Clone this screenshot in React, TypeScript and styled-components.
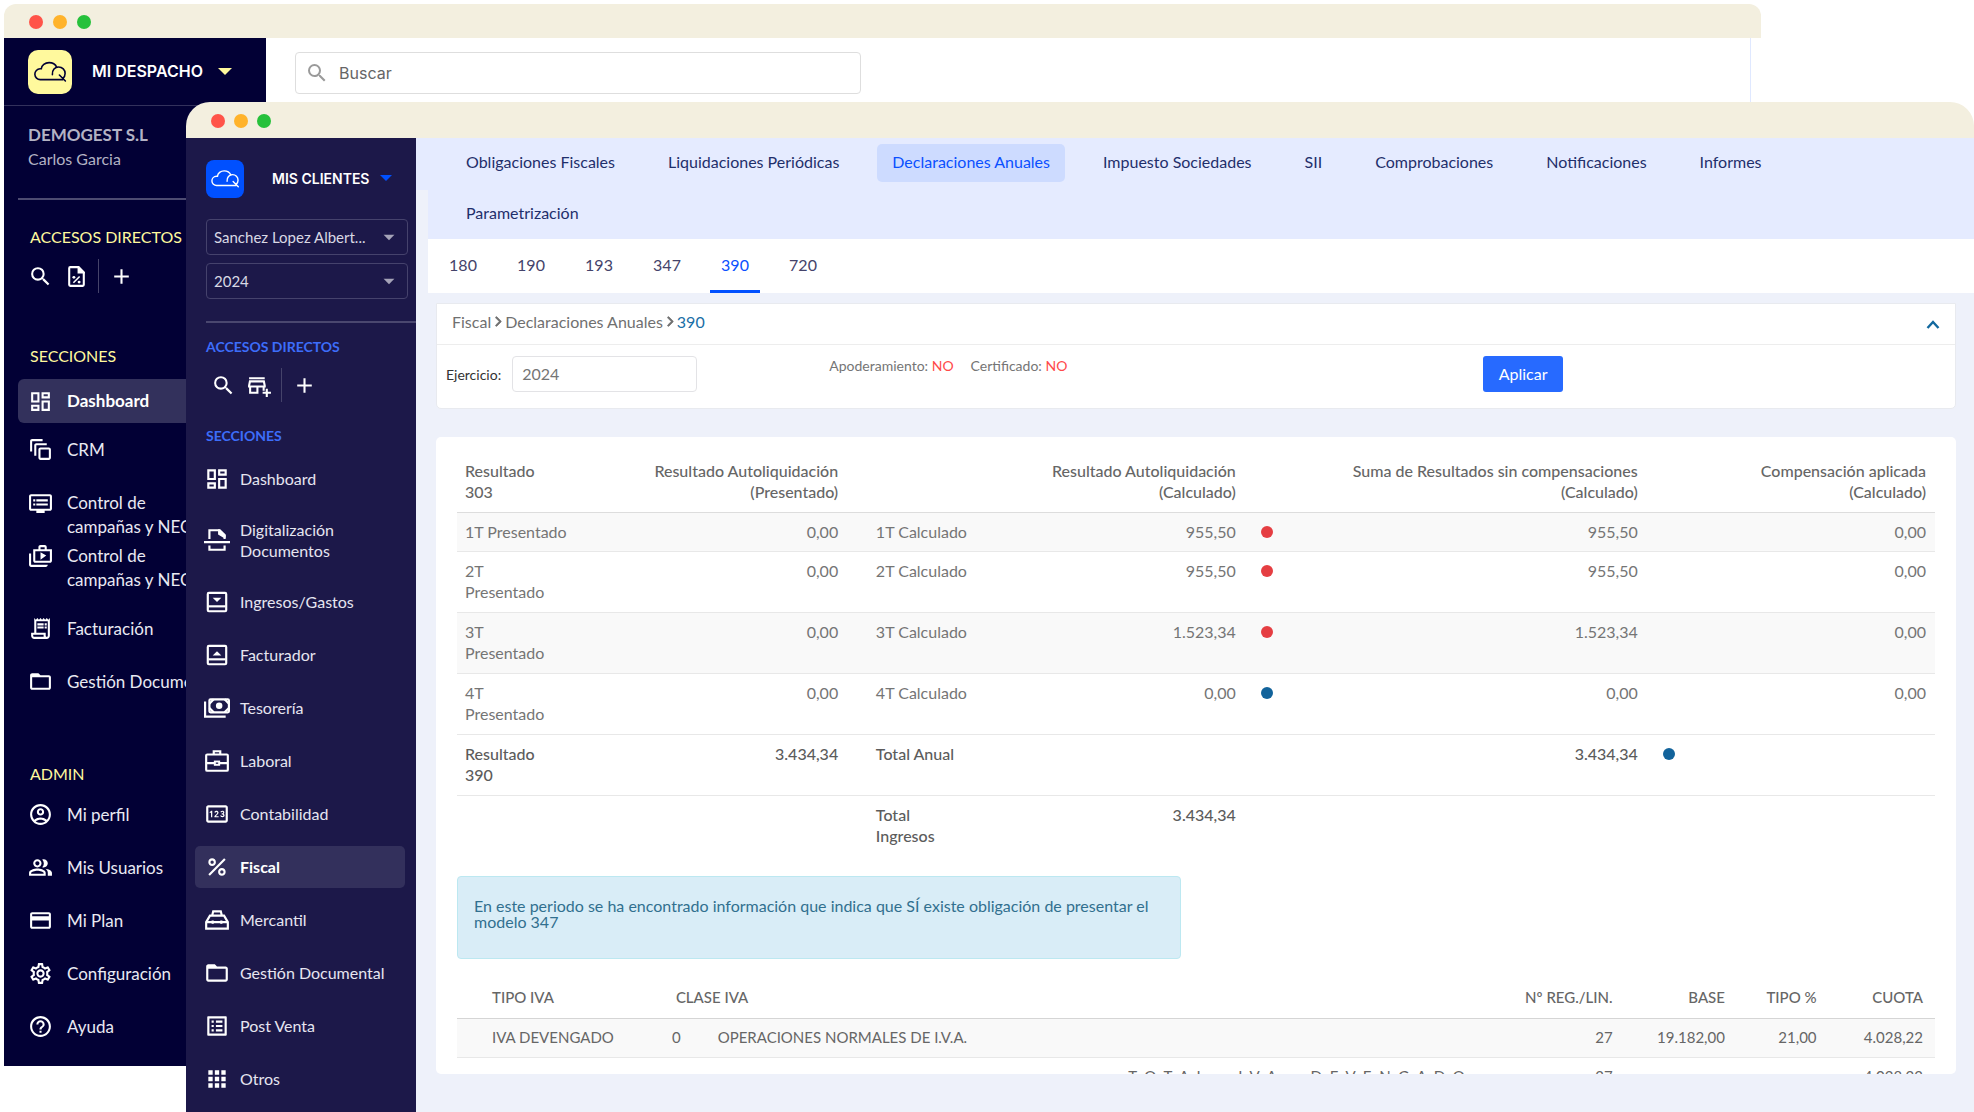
import React from "react";
import styled, { createGlobalStyle, css } from "styled-components";
import {
  MdAdd,
  MdApps,
  MdArrowDropDown,
  MdFolderOpen,
  MdHelpOutline,
  MdOutlineAccountCircle,
  MdOutlineAddBusiness,
  MdOutlineAutoAwesomeMotion,
  MdOutlineCreditCard,
  MdOutlineDashboard,
  MdOutlineDvr,
  MdOutlineListAlt,
  MdOutlinePeopleAlt,
  MdOutlinePercent,
  MdOutlinePin,
  MdOutlineReceiptLong,
  MdOutlineSettings,
  MdOutlineShopTwo,
  MdSearch,
} from "react-icons/md";
import { FaAngleRight } from "react-icons/fa6";

const GlobalStyle = createGlobalStyle`
  *, *::before, *::after { box-sizing: border-box; }
  body {
    margin: 0;
    background: #ffffff;
    font-family: Lato, "Open Sans", sans-serif;
    font-size: 16px;
    line-height: 21px;
  }
  button, input, select { font: inherit; }
  a { color: inherit; text-decoration: none; }
  ul { list-style: none; margin: 0; padding: 0; }
`;

/* ---------- windows ---------- */

const Desktop = styled.div`
  position: relative;
  height: 100vh;
  min-height: 700px;
  overflow: hidden;
`;

const BackWindow = styled.section`
  position: absolute;
  top: 4px;
  left: 4px;
  bottom: 46px;
  width: 89%;
  display: flex;
  flex-direction: column;
`;

const FrontWindow = styled.section`
  position: absolute;
  top: 102px;
  left: 186px;
  right: 0;
  bottom: 0;
  display: flex;
  flex-direction: column;
`;

const TitleBar = styled.div<{ $front?: boolean }>`
  display: flex;
  align-items: center;
  gap: ${(p) => (p.$front ? 9 : 10)}px;
  flex: none;
  height: ${(p) => (p.$front ? 36 : 34)}px;
  padding: 2px 0 0 25px;
  background: #f3efdf;
  border-radius: ${(p) => (p.$front ? "24px 24px 0 0" : "12px 12px 0 0")};
`;

const Light = styled.span<{ $color: string }>`
  width: 14px;
  height: 14px;
  border-radius: 50%;
  background: ${(p) => p.$color};
`;

const WindowBody = styled.div`
  flex: 1;
  min-height: 0;
  display: flex;
`;

/* ---------- back window ---------- */

const BackSidebar = styled.aside`
  flex: none;
  width: 262px;
  background: #020035;
  color: #e9e9f2;
  overflow: hidden;
`;

const BackBrand = styled.div`
  display: flex;
  align-items: center;
  gap: 20px;
  height: 68px;
  padding: 1px 24px 0 24px;
  border-bottom: 1px solid #33315c;
`;

const Logo = styled.span<{ $front?: boolean }>`
  display: grid;
  width: ${(p) => (p.$front ? 38 : 44)}px;
  height: ${(p) => (p.$front ? 38 : 44)}px;
  border-radius: ${(p) => (p.$front ? 8 : 10)}px;
  color: ${(p) => (p.$front ? "#ffffff" : "#020035")};
  background: ${(p) => (p.$front ? "#0050ff" : "#fff99d")};
`;

const SwitchButton = styled.button<{ $arrow: string; $small?: boolean }>`
  display: flex;
  align-items: center;
  gap: ${(p) => (p.$small ? 11 : 15)}px;
  padding: 0 0 2px;
  border: 0;
  background: none;
  color: #ffffff;
  font-family: Inter, sans-serif;
  font-weight: 600;
  font-size: ${(p) => (p.$small ? 14 : 16)}px;
  white-space: nowrap;

  &::after {
    content: "";
    border: solid transparent;
    border-width: ${(p) => (p.$small ? "6px 6px 0" : "7px 7px 0")};
    border-top-color: ${(p) => p.$arrow};
  }
`;

const Company = styled.div`
  height: 94px;
  margin-left: 14px;
  padding: 17px 0 0 10px;
  border-bottom: 2px solid #4d4b71;
  line-height: 24px;
  color: #b3b2c4;

  strong {
    display: block;
    font-size: 17px;
  }
`;

const GroupTitle = styled.h2<{ $color: string; $small?: boolean }>`
  margin: 0;
  font-size: ${(p) => (p.$small ? 14 : 16)}px;
  font-weight: ${(p) => (p.$small ? 700 : 400)};
  line-height: 22px;
  color: ${(p) => p.$color};
  white-space: nowrap;
`;

const BackGroup = styled.div<{ $top: number; $bottom?: number }>`
  padding: ${(p) => p.$top}px 0 ${(p) => p.$bottom ?? 0}px 26px;
`;

const Shortcuts = styled.div<{ $front?: boolean }>`
  display: flex;
  align-items: center;
  gap: 8px;
  height: 34px;
  margin: ${(p) => (p.$front ? "10px 0 23px 3px" : "11px 0 0 -4px")};
  color: #ffffff;
`;

const IconButton = styled.button`
  display: grid;
  place-items: center;
  width: 28px;
  height: 28px;
  padding: 0;
  border: 0;
  background: none;
  color: inherit;
  font-size: 25px;
`;

const Separator = styled.span`
  width: 1px;
  height: 34px;
  background: #45436a;
`;

const BackNav = styled.ul<{ $bottom?: number }>`
  padding-left: 14px;
  margin-bottom: ${(p) => p.$bottom ?? 0}px;
`;

const BackLink = styled.a<{ $active?: boolean }>`
  display: flex;
  align-items: center;
  gap: 14px;
  min-height: 53px;
  padding-left: 10px;
  font-size: 17px;
  line-height: 24px;

  svg {
    flex: none;
    font-size: 25px;
    color: #ffffff;
  }

  ${(p) =>
    p.$active &&
    css`
      min-height: 44px;
      border-radius: 6px;
      background: #33315c;
      color: #ffffff;
      font-weight: 700;
    `}
`;

const BackWrapLink = styled(BackLink)`
  align-items: flex-start;
  white-space: nowrap;
`;

const BackMain = styled.main`
  flex: 1;
  margin-right: 10px;
  padding: 14px 29px;
  background: #ffffff;
  border-right: 1px solid #dfe8ff;
`;

const SearchBox = styled.label`
  display: flex;
  align-items: center;
  gap: 8px;
  max-width: 566px;
  height: 42px;
  padding-left: 9px;
  border: 1px solid #dedede;
  border-radius: 4px;
  color: #9a9a9a;

  svg { font-size: 24px; }

  input {
    flex: 1;
    border: 0;
    outline: 0;
    font-family: Inter, sans-serif;
    font-size: 16px;
    background: none;
  }
  input::placeholder { color: #666666; opacity: 1; }
`;

/* ---------- front window ---------- */

const FrontSidebar = styled.aside`
  flex: none;
  width: 230px;
  padding-left: 20px;
  background: #1c1849;
  color: #e6e5f0;
  overflow: hidden;
`;

const FrontBrand = styled.div`
  display: flex;
  align-items: center;
  gap: 28px;
  padding: 22px 0 21px;
`;

const Picker = styled.div`
  display: grid;
  align-items: center;
  margin: 0 8px 8px 0;

  select, svg { grid-area: 1 / 1; }

  svg {
    justify-self: end;
    margin-right: 6px;
    font-size: 26px;
    color: #a5a3b8;
    pointer-events: none;
  }

  select {
    width: 100%;
    height: 36px;
    padding: 0 30px 0 7px;
    appearance: none;
    border: 1px solid #45426c;
    border-radius: 4px;
    background: #1c1849;
    color: #d9d8e4;
    font-size: 15px;
  }
`;

const FrontDivider = styled.hr`
  margin: 22px 0 13px;
  border: 0;
  border-top: 2px solid #4a476f;
`;

const FrontNav = styled.ul`
  margin: 5px 11px 0 -11px;
`;

const FrontItem = styled.li<{ $tall?: boolean }>`
  display: grid;
  align-items: center;
  height: ${(p) => (p.$tall ? 70 : 53)}px;
`;

const FrontLink = styled.a<{ $active?: boolean }>`
  display: flex;
  align-items: center;
  gap: 10px;
  min-height: 42px;
  padding-left: 9px;
  border-radius: 5px;
  font-size: 16px;
  line-height: 21px;

  svg {
    flex: none;
    font-size: 26px;
    color: #ffffff;
  }

  ${(p) =>
    p.$active &&
    css`
      background: #33305c;
      color: #ffffff;
      font-weight: 700;
    `}
`;

const FrontMain = styled.main`
  flex: 1;
  min-width: 0;
  display: flex;
  flex-direction: column;
  background: #eef1fa;
  color: #757575;
`;

const Tabs = styled.nav`
  display: flex;
  flex-wrap: wrap;
  gap: 13px 23px;
  padding: 6px 60px 6px 35px;
  background: linear-gradient(#eef1fa, #eef1fa) 0 52px / 12px 100% no-repeat #e5ebff;
`;

const Tab = styled.a<{ $active?: boolean }>`
  padding: 7px 15px 10px;
  border-radius: 5px;
  color: ${(p) => (p.$active ? "#0a50ff" : "#1f2f6b")};
  background: ${(p) => (p.$active ? "#cddbff" : "transparent")};
`;

const SubTabs = styled.nav`
  display: flex;
  gap: 18px;
  margin-left: 12px;
  padding-left: 10px;
  background: #ffffff;
`;

const SubTab = styled.a<{ $active?: boolean }>`
  min-width: 50px;
  padding: 15px 0;
  border-bottom: 3px solid ${(p) => (p.$active ? "#0050ff" : "transparent")};
  color: ${(p) => (p.$active ? "#0a50ff" : "#44436a")};
  text-align: center;
`;

const FilterCard = styled.section`
  margin: 10px 18px 0 20px;
  border: 1px solid #e8eaef;
  border-radius: 0 0 5px 5px;
  background: #ffffff;
`;

const CardHead = styled.div`
  display: flex;
  align-items: center;
  justify-content: space-between;
  height: 41px;
  padding: 0 12px 5px 15px;
  border-bottom: 1px solid #ededed;
`;

const Breadcrumb = styled.nav`
  display: flex;
  align-items: center;
  gap: 3px;
  color: #707070;

  svg {
    width: 8px;
    height: 13px;
    stroke: currentColor;
    stroke-width: 30px;
  }
`;

const Current = styled.a`
  color: #1a6ea6;
`;

const Collapse = styled.button`
  padding: 6px 0 0;
  border: 0;
  background: none;
  color: #12689e;
  line-height: 0;
`;

const FilterBody = styled.form`
  display: grid;
  grid-template-columns: 25.4% 43.3% 1fr;
  align-items: start;
  padding: 11px 0 16px 9px;
`;

const YearField = styled.label`
  display: flex;
  align-items: center;
  gap: 11px;
  font-size: 14px;
  color: #333333;

  input {
    width: 185px;
    height: 36px;
    padding: 0 9px 2px;
    border: 1px solid #e3e3e6;
    border-radius: 4px;
    color: #757575;
    font-size: 16px;
  }
`;

const Status = styled.p`
  display: flex;
  gap: 17px;
  margin: 0;
  font-size: 14px;
  line-height: 20px;
`;

const No = styled.span`
  color: #ff4a4a;
`;

const Apply = styled.button`
  justify-self: start;
  height: 36px;
  padding: 0 16px 2px;
  border: 0;
  border-radius: 3px;
  background: #276aff;
  color: #ffffff;
`;

const ResultCard = styled.section`
  flex: 1;
  min-height: 0;
  overflow: hidden;
  margin: 28px 18px 38px 20px;
  padding: 14px 21px 0;
  border-radius: 5px;
  background: #ffffff;
`;

const Table = styled.table`
  width: 100%;
  table-layout: fixed;
  border-spacing: 0;

  th, td {
    padding: 8px 8px 9px;
    text-align: left;
    vertical-align: top;
    white-space: nowrap;
  }
  th {
    padding: 9px 8px 10px;
    font-weight: 500;
    color: #666666;
  }
`;

const Summary = styled(Table)`
  thead th { border-bottom: 1px solid #dddddd; }
  tbody tr:nth-child(-n + 5) > * { border-bottom: 1px solid #e8e8e8; }
  tbody tr:nth-child(1) > *, tbody tr:nth-child(3) > * { background: #f9f9f9; }
  tbody tr + tr > td { padding-bottom: 10px; }
  tr > .num { padding-right: 9px; text-align: right; }
`;

const TotalRow = styled.tr`
  td { font-weight: 500; color: #5c5c5c; }
`;

const Dot = styled.span<{ $color: "red" | "blue" }>`
  display: block;
  width: 12px;
  height: 12px;
  margin: 5px 0 0 8px;
  border-radius: 50%;
  background: ${(p) => (p.$color === "red" ? "#e53e42" : "#12639b")};
`;

const Notice = styled.div`
  width: 49%;
  min-height: 83px;
  margin: 20px 0 19px;
  padding: 21px 16px;
  border: 1px solid #bce8f1;
  border-radius: 4px;
  background: #d9edf7;
  color: #31708f;
  line-height: 16px;
`;

const VatTable = styled(Table)`
  color: #666666;
  font-size: 15px;

  thead th { border-bottom: 1px solid #d5d5d5; }
  tbody tr:first-child td { border-bottom: 1px solid #e8e8e8; background: #f9f9f9; }
  th, td { text-align: right; padding-left: 5px; padding-right: 12px; }
  tr > .text { text-align: left; }
  tr > .class { text-align: left; padding-left: 9px; }
  tr > .first { text-align: left; padding-left: 35px; }
`;

const Spaced = styled.td`
  && { white-space: pre; }
`;

/* ---------- drawings ---------- */

const CloudLogo = () => (
  <svg viewBox="0 0 44 44" fill="none" stroke="currentColor" strokeWidth="1.6" strokeLinecap="round" aria-hidden="true">
    <path d="M35 29.6H12.4a5.4 5.4 0 0 1-.3-10.8h1.2c.2-3.6 3.8-6.2 7.8-6.2 3.6 0 6.3 1.7 7.6 4.6" />
    <path d="M24.4 24.6c-.4-4.6 2.6-7.6 6.2-7.6 3.8 0 6.5 2.9 6.5 6.4 0 2.2-.9 4-2.4 5.2M31.4 25l6 6" />
  </svg>
);

const Glyph = ({ children }: { children: React.ReactNode }) => (
  <svg viewBox="0 0 24 24" width="1em" height="1em" fill="none" stroke="currentColor" strokeWidth="2" aria-hidden="true">
    {children}
  </svg>
);

const PercentFileIcon = () => (
  <Glyph>
    <path d="M14 3H6a1 1 0 0 0-1 1v16a1 1 0 0 0 1 1h12a1 1 0 0 0 1-1V8z" />
    <path d="M13 2h1l6 6v1h-7z" fill="currentColor" stroke="none" />
    <path d="m9 18 6-6" strokeWidth="1.6" />
    <circle cx="9.5" cy="12.8" r="1.4" fill="currentColor" stroke="none" />
    <circle cx="14.5" cy="17.4" r="1.4" fill="currentColor" stroke="none" />
  </Glyph>
);

const ScanIcon = () => (
  <Glyph>
    <path d="M5 11V3h9l5 5v3M5 17v4h14v-4M0 14h24" />
    <path d="M13 2h2l5 5v3h-2l-5-3z" fill="currentColor" stroke="none" />
  </Glyph>
);

const DrawerIcon = ({ up }: { up?: boolean }) => (
  <Glyph>
    <rect x="3.5" y="3.5" width="17" height="17" rx="1" />
    <path d="M4 16h16" />
    <path d={up ? "m8 12.500 4-4 4 4z" : "m8 8 4 4 4-4z"} fill="currentColor" stroke="none" />
  </Glyph>
);

const CashIcon = () => (
  <Glyph>
    <path d="M1 6v14h19" />
    <rect x="5" y="4" width="18" height="12" rx="1" />
    <circle cx="14" cy="10" r="3" fill="currentColor" stroke="none" />
    <path d="M5 8 9 4M5 12l4 4M23 8l-4-4M23 12l-4 4" />
  </Glyph>
);

const BriefcaseIcon = () => (
  <Glyph>
    <rect x="2" y="6" width="20" height="15" rx="1" />
    <path d="M9 6V3h6v3M2 14h8M14 14h8" />
    <rect x="10" y="12.5" width="4" height="3" strokeWidth="1.8" />
  </Glyph>
);

const ToolboxIcon = () => (
  <Glyph>
    <path d="M2 20v-6l3.5-6h13l3.5 6v6zM7.500 8l1-4h7l1 4M2 14h20" />
    <path d="M8 12.5v3M16 12.5v3" />
  </Glyph>
);

/* ---------- data ---------- */

type NavEntry = { label: React.ReactNode; icon: React.ReactNode; active?: boolean; tall?: boolean };

const adminNav: NavEntry[] = [
  { label: "Mi perfil", icon: <MdOutlineAccountCircle /> },
  { label: "Mis Usuarios", icon: <MdOutlinePeopleAlt /> },
  { label: "Mi Plan", icon: <MdOutlineCreditCard /> },
  { label: "Configuración", icon: <MdOutlineSettings /> },
  { label: "Ayuda", icon: <MdHelpOutline /> },
];

const clientNav: NavEntry[] = [
  { label: "Dashboard", icon: <MdOutlineDashboard /> },
  { label: <>Digitalización<br />Documentos</>, icon: <ScanIcon />, tall: true },
  { label: "Ingresos/Gastos", icon: <DrawerIcon /> },
  { label: "Facturador", icon: <DrawerIcon up /> },
  { label: "Tesorería", icon: <CashIcon /> },
  { label: "Laboral", icon: <BriefcaseIcon /> },
  { label: "Contabilidad", icon: <MdOutlinePin /> },
  { label: "Fiscal", icon: <MdOutlinePercent />, active: true },
  { label: "Mercantil", icon: <ToolboxIcon /> },
  { label: "Gestión Documental", icon: <MdFolderOpen /> },
  { label: "Post Venta", icon: <MdOutlineListAlt /> },
  { label: "Otros", icon: <MdApps /> },
];

const tabs = [
  "Obligaciones Fiscales",
  "Liquidaciones Periódicas",
  "Declaraciones Anuales",
  "Impuesto Sociedades",
  "SII",
  "Comprobaciones",
  "Notificaciones",
  "Informes",
  "Parametrización",
];

const models = ["180", "190", "193", "347", "390", "720"];

const quarters = [
  { label: "1T Presentado", calc: "1T Calculado", value: "955,50", color: "red" as const },
  { label: <>2T<br />Presentado</>, calc: "2T Calculado", value: "955,50", color: "red" as const },
  { label: <>3T<br />Presentado</>, calc: "3T Calculado", value: "1.523,34", color: "red" as const },
  { label: <>4T<br />Presentado</>, calc: "4T Calculado", value: "0,00", color: "blue" as const },
];

const summaryColumns = ["7.9%", "18.5%", "1.4%", "6.8%", "18.7%", "3%", "24.2%", "3%", "16.5%"];
const vatColumns = ["14.2%", "3.1%", "51.7%", "10%", "7.6%", "6.2%", "7.2%"];

const Columns = ({ widths }: { widths: string[] }) => (
  <colgroup>
    {widths.map((width, i) => (
      <col key={i} width={width} />
    ))}
  </colgroup>
);

const Lights = () => (
  <>
    <Light $color="#ff5449" />
    <Light $color="#ffb32b" />
    <Light $color="#26c13b" />
  </>
);

/* ---------- page ---------- */

const OfficeWindow = () => (
  <BackWindow>
    <TitleBar><Lights /></TitleBar>
    <WindowBody>
      <BackSidebar>
        <BackBrand>
          <Logo><CloudLogo /></Logo>
          <SwitchButton type="button" $arrow="#fff99d">MI DESPACHO</SwitchButton>
        </BackBrand>
        <Company>
          <strong>DEMOGEST S.L</strong>
          Carlos Garcia
        </Company>
        <BackGroup $top={26}>
          <GroupTitle $color="#fff99d">ACCESOS DIRECTOS</GroupTitle>
          <Shortcuts>
            <IconButton type="button" aria-label="Buscar"><MdSearch /></IconButton>
            <IconButton type="button" aria-label="Impuestos"><PercentFileIcon /></IconButton>
            <Separator />
            <IconButton type="button" aria-label="Añadir"><MdAdd /></IconButton>
          </Shortcuts>
        </BackGroup>
        <BackGroup $top={52} $bottom={12}>
          <GroupTitle $color="#fff99d">SECCIONES</GroupTitle>
        </BackGroup>
        <BackNav $bottom={15}>
          <li><BackLink href="#dashboard" $active><MdOutlineDashboard />Dashboard</BackLink></li>
          <li><BackLink href="#crm"><MdOutlineAutoAwesomeMotion />CRM</BackLink></li>
        </BackNav>
        <BackNav $bottom={5}>
          <li>
            <BackWrapLink href="#campanas"><MdOutlineDvr /><span>Control de<br />campañas y NEOs</span></BackWrapLink>
          </li>
          <li>
            <BackWrapLink href="#neos"><MdOutlineShopTwo /><span>Control de<br />campañas y NEOs</span></BackWrapLink>
          </li>
        </BackNav>
        <BackNav>
          <li><BackLink href="#facturacion"><MdOutlineReceiptLong />Facturación</BackLink></li>
          <li><BackLink href="#documental"><MdFolderOpen />Gestión Documental</BackLink></li>
        </BackNav>
        <BackGroup $top={55} $bottom={3}>
          <GroupTitle $color="#fff99d">ADMIN</GroupTitle>
        </BackGroup>
        <BackNav>
          {adminNav.map((item, i) => (
            <li key={i}><BackLink href="#admin">{item.icon}{item.label}</BackLink></li>
          ))}
        </BackNav>
      </BackSidebar>
      <BackMain>
        <SearchBox>
          <MdSearch />
          <input type="search" placeholder="Buscar" aria-label="Buscar" />
        </SearchBox>
      </BackMain>
    </WindowBody>
  </BackWindow>
);

const ClientSidebar = () => (
  <FrontSidebar>
    <FrontBrand>
      <Logo $front><CloudLogo /></Logo>
      <SwitchButton type="button" $small $arrow="#0050ff">MIS CLIENTES</SwitchButton>
    </FrontBrand>
    <Picker>
      <select aria-label="Cliente"><option>Sanchez Lopez Albert...</option></select>
      <MdArrowDropDown />
    </Picker>
    <Picker>
      <select aria-label="Año"><option>2024</option></select>
      <MdArrowDropDown />
    </Picker>
    <FrontDivider />
    <GroupTitle $small $color="#3d6dfa">ACCESOS DIRECTOS</GroupTitle>
    <Shortcuts $front>
      <IconButton type="button" aria-label="Buscar"><MdSearch /></IconButton>
      <IconButton type="button" aria-label="Añadir empresa"><MdOutlineAddBusiness /></IconButton>
      <Separator />
      <IconButton type="button" aria-label="Añadir"><MdAdd /></IconButton>
    </Shortcuts>
    <GroupTitle $small $color="#3d6dfa">SECCIONES</GroupTitle>
    <FrontNav>
      {clientNav.map((item, i) => (
        <FrontItem key={i} $tall={item.tall}>
          <FrontLink href="#seccion" $active={item.active}>
            {item.icon}
            <span>{item.label}</span>
          </FrontLink>
        </FrontItem>
      ))}
    </FrontNav>
  </FrontSidebar>
);

const SummaryTable = () => (
  <Summary>
    <Columns widths={summaryColumns} />
    <thead>
      <tr>
        <th>Resultado<br />303</th>
        <th className="num">Resultado Autoliquidación<br />(Presentado)</th>
        <th />
        <th />
        <th className="num">Resultado Autoliquidación<br />(Calculado)</th>
        <th />
        <th className="num">Suma de Resultados sin compensaciones<br />(Calculado)</th>
        <th />
        <th className="num">Compensación aplicada<br />(Calculado)</th>
      </tr>
    </thead>
    <tbody>
      {quarters.map((q) => (
        <tr key={q.calc}>
          <td>{q.label}</td>
          <td className="num">0,00</td>
          <td />
          <td>{q.calc}</td>
          <td className="num">{q.value}</td>
          <td><Dot $color={q.color} /></td>
          <td className="num">{q.value}</td>
          <td />
          <td className="num">0,00</td>
        </tr>
      ))}
      <TotalRow>
        <td>Resultado<br />390</td>
        <td className="num">3.434,34</td>
        <td />
        <td>Total Anual</td>
        <td />
        <td />
        <td className="num">3.434,34</td>
        <td><Dot $color="blue" /></td>
        <td />
      </TotalRow>
      <TotalRow>
        <td />
        <td />
        <td />
        <td>Total<br />Ingresos</td>
        <td className="num">3.434,34</td>
        <td colSpan={4} />
      </TotalRow>
    </tbody>
  </Summary>
);

const Vat = () => (
  <VatTable>
    <Columns widths={vatColumns} />
    <thead>
      <tr>
        <th className="first">TIPO IVA</th>
        <th className="class" colSpan={2}>CLASE IVA</th>
        <th>Nº REG./LIN.</th>
        <th>BASE</th>
        <th>TIPO %</th>
        <th>CUOTA</th>
      </tr>
    </thead>
    <tbody>
      <tr>
        <td className="first">IVA DEVENGADO</td>
        <td className="text">0</td>
        <td className="text">OPERACIONES NORMALES DE I.V.A.</td>
        <td>27</td>
        <td>19.182,00</td>
        <td>21,00</td>
        <td>4.028,22</td>
      </tr>
      <tr>
        <td />
        <td />
        <Spaced>{"T  O  T  A  L         I  V  A         D  E  V  E  N  G  A  D  O"}</Spaced>
        <td>27</td>
        <td />
        <td />
        <td>4.028,22</td>
      </tr>
    </tbody>
  </VatTable>
);

const ClientWindow = () => (
  <FrontWindow>
    <TitleBar $front><Lights /></TitleBar>
    <WindowBody>
      <ClientSidebar />
      <FrontMain>
        <Tabs>
          {tabs.map((t) => (
            <Tab key={t} href="#tab" $active={t === "Declaraciones Anuales"}>{t}</Tab>
          ))}
        </Tabs>
        <SubTabs>
          {models.map((m) => (
            <SubTab key={m} href="#modelo" $active={m === "390"}>{m}</SubTab>
          ))}
        </SubTabs>
        <FilterCard>
          <CardHead>
            <Breadcrumb>
              <a href="#fiscal">Fiscal</a>
              <FaAngleRight />
              <a href="#declaraciones">Declaraciones Anuales</a>
              <FaAngleRight />
              <Current href="#390">390</Current>
            </Breadcrumb>
            <Collapse type="button" aria-label="Contraer">
              <svg width="20" height="12" viewBox="0 0 20 12" fill="none" stroke="currentColor" strokeWidth="2.4">
                <path d="m4.500 9 5.500-6 5.500 6" />
              </svg>
            </Collapse>
          </CardHead>
          <FilterBody onSubmit={(e) => e.preventDefault()}>
            <YearField>
              Ejercicio:
              <input type="text" defaultValue="2024" />
            </YearField>
            <Status>
              <span>Apoderamiento: <No>NO</No></span>
              <span>Certificado: <No>NO</No></span>
            </Status>
            <Apply type="submit">Aplicar</Apply>
          </FilterBody>
        </FilterCard>
        <ResultCard>
          <SummaryTable />
          <Notice>
            En este periodo se ha encontrado información que indica que SÍ existe obligación de presentar el modelo 347
          </Notice>
          <Vat />
        </ResultCard>
      </FrontMain>
    </WindowBody>
  </FrontWindow>
);

export default function App() {
  return (
    <Desktop>
      <GlobalStyle />
      <OfficeWindow />
      <ClientWindow />
    </Desktop>
  );
}
